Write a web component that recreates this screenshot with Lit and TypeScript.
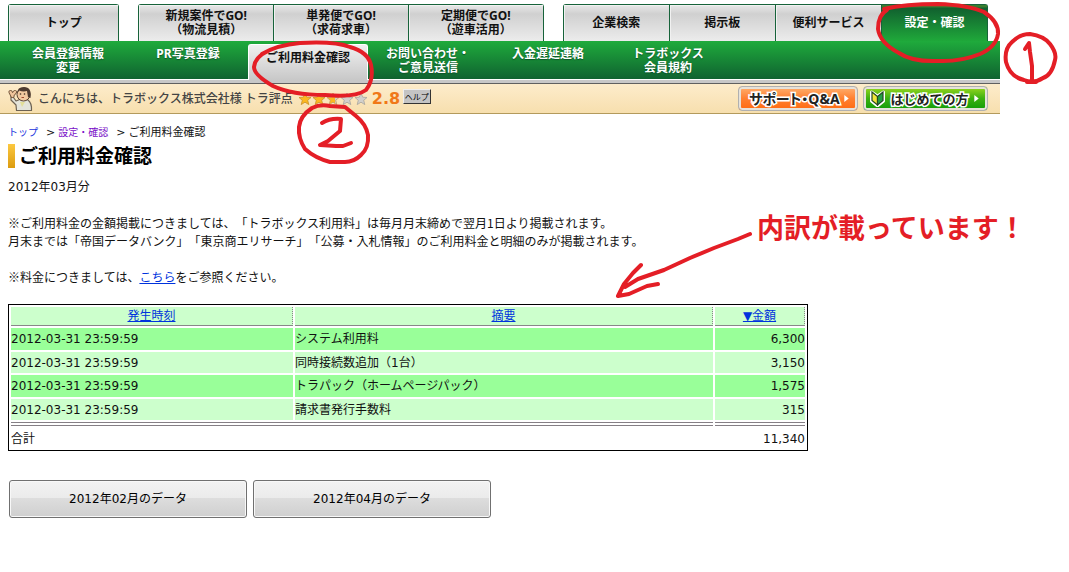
import { LitElement, html, css, svg } from "lit";
import { customElement } from "lit/decorators.js";

interface Tab {
  lines: string[];
  active?: boolean;
}

interface Charge {
  time: string;
  item: string;
  amount: string;
}

const TAB_GROUPS: { name: string; tabs: Tab[] }[] = [
  { name: "home", tabs: [{ lines: ["トップ"] }] },
  {
    name: "deals",
    tabs: [
      { lines: ["新規案件でGO!", "（物流見積）"] },
      { lines: ["単発便でGO!", "（求荷求車）"] },
      { lines: ["定期便でGO!", "（遊車活用）"] },
    ],
  },
  {
    name: "tools",
    tabs: [
      { lines: ["企業検索"] },
      { lines: ["掲示板"] },
      { lines: ["便利サービス"] },
      { lines: ["設定・確認"], active: true },
    ],
  },
];

const SUB_ITEMS: Tab[] = [
  { lines: ["会員登録情報", "変更"] },
  { lines: ["PR写真登録"] },
  { lines: ["ご利用料金確認"], active: true },
  { lines: ["お問い合わせ・", "ご意見送信"] },
  { lines: ["入金遅延連絡"] },
  { lines: ["トラボックス", "会員規約"] },
];

const CHARGES: Charge[] = [
  { time: "2012-03-31 23:59:59", item: "システム利用料", amount: "6,300" },
  { time: "2012-03-31 23:59:59", item: "同時接続数追加（1台）", amount: "3,150" },
  { time: "2012-03-31 23:59:59", item: "トラパック（ホームページパック）", amount: "1,575" },
  { time: "2012-03-31 23:59:59", item: "請求書発行手数料", amount: "315" },
];

const stack = (lines: string[]) => lines.map((l) => html`<span class="line">${l}</span>`);

@customElement("site-header")
class SiteHeader extends LitElement {
  static styles = css`
    :host {
      display: block;
      max-width: 1000px;
      font-weight: bold;
      font-size: 12px;
      line-height: 14px;
      font-family: "Noto Sans", "Noto Sans CJK JP", sans-serif;
    }
    a {
      color: inherit;
      text-decoration: none;
    }
    .line {
      display: block;
      white-space: nowrap;
    }
    .tabs {
      display: flex;
      gap: 19px;
      padding: 4px 12px 0 8px;
    }
    .group {
      display: flex;
      border: 1px solid #17633a;
      border-bottom: 0;
      border-radius: 3px 3px 0 0;
      box-sizing: border-box;
      min-width: 0;
    }
    .home { flex: 110 1 0; }
    .deals { flex: 406 1 0; }
    .tools { flex: 426 1 0; }
    .tab {
      flex: 1 1 0;
      min-width: 0;
      height: 36px;
      display: flex;
      flex-direction: column;
      align-items: center;
      justify-content: center;
      color: #111;
      background: linear-gradient(#e8e8e8 0, #d0d0d0 25%, #ececec 100%);
      box-shadow: inset 1px 1px 0 #f1f1f1;
    }
    .tab + .tab {
      border-left: 1px solid #17633a;
    }
    .tab.active {
      color: #fff;
      background: linear-gradient(#3a7d2f 0, #3a7d2f 2px, #11602f 3px, #1fa83a 100%);
      box-shadow: none;
    }
    .sub {
      display: flex;
      padding-left: 8px;
      height: 38px;
      color: #fff;
      background: linear-gradient(#1fab3c, #0f6230);
      border-bottom: 1px solid #fff;
    }
    .sub-item {
      flex: 0 1 120px;
      min-width: 0;
      padding-top: 6px;
      text-align: center;
      text-shadow: 0 1px 1px #0c5428;
    }
    .sub-item.active {
      margin: 3px 0 -1px;
      color: #111;
      text-shadow: none;
      background: linear-gradient(#f0f0f0, #c8c8c8);
      border: 1px solid #fff;
      border-bottom: 0;
      border-radius: 3px 3px 0 0;
      box-sizing: border-box;
    }
    .strip {
      height: 3px;
      background: #c8c8c8;
      border-bottom: 1px solid #606060;
    }
  `;

  render() {
    return html`
      <nav class="tabs">
        ${TAB_GROUPS.map(
          (g) => html`<div class="group ${g.name}">
            ${g.tabs.map((t) => html`<a href="#" class="tab ${t.active ? "active" : ""}">${stack(t.lines)}</a>`)}
          </div>`
        )}
      </nav>
      <nav class="sub">
        ${SUB_ITEMS.map((t) => html`<a href="#" class="sub-item ${t.active ? "active" : ""}">${stack(t.lines)}</a>`)}
      </nav>
      <div class="strip"></div>
    `;
  }
}

@customElement("greeting-bar")
class GreetingBar extends LitElement {
  static styles = css`
    :host {
      display: block;
      max-width: 1000px;
      font-family: "Noto Sans", "Noto Sans CJK JP", sans-serif;
      font-size: 12px;
    }
    .bar {
      display: flex;
      align-items: center;
      height: 29px;
      padding: 0 12px 0 8px;
      border-bottom: 1px solid #b39a5c;
      background: linear-gradient(#fdeccb, #f7dfae);
      white-space: nowrap;
    }
    .hello {
      margin-left: 4px;
      color: #444;
      font-weight: 500;
    }
    .stars {
      margin-left: 5px;
    }
    .score {
      margin-left: 4px;
      width: 31px;
      font: bold 16px "DejaVu Sans", sans-serif;
      color: #f07818;
    }
    .help {
      align-self: flex-start;
      margin-top: 5px;
      width: 28px;
      height: 15px;
      padding: 0;
      border: 1px solid;
      border-color: #eee #333 #333 #eee;
      background: #c4c4c4;
      color: #000;
      font: 8px/12px "Noto Sans CJK JP", sans-serif;
    }
    .links {
      display: flex;
      gap: 5px;
      margin-left: auto;
    }
    .pill {
      display: flex;
      align-items: center;
      justify-content: space-between;
      box-sizing: border-box;
      height: 25px;
      padding: 0 8px 0 6px;
      border: 1px solid #b0b0b0;
      border-radius: 4px;
      text-decoration: none;
      color: #222;
      font-weight: bold;
      font-size: 13px;
      line-height: 18px;
    }
    .support {
      width: 120px;
      padding-left: 10px;
      background: linear-gradient(#ffb070, #ff8030 50%, #ff6a10);
      box-shadow: inset 0 0 0 2px #e6e2da;
    }
    .beginner {
      width: 125px;
      background: linear-gradient(#9ad820, #3cb010 50%, #109c08);
      box-shadow: inset 0 0 0 2px #e6e2da;
    }
    .label {
      -webkit-text-stroke: 3px #fff;
      paint-order: stroke fill;
    }
    .support .label {
      font-size: 14px;
      font-feature-settings: "palt";
    }
  `;

  private star(i: number, fill: string, edge: string) {
    return svg`<path transform="translate(${i * 14} 0)" fill=${fill} stroke=${edge} stroke-width="0.8"
      d="M7 1 L8.7 5.2 L13 5.5 L9.7 8.3 L10.8 12.6 L7 10.2 L3.2 12.6 L4.3 8.3 L1 5.5 L5.3 5.2 Z" />`;
  }

  render() {
    return html`
      <div class="bar">
        <svg width="26" height="26" viewBox="0 0 26 26" aria-hidden="true">
          <path d="M3 8 L8 15 L13 13 L20 14 Q24 17 23.5 24.5 L8.5 24.5 L8 19 L3 14 Z" fill="#e4e4da" stroke="#6d6253" stroke-width="1.2" stroke-linejoin="round" />
          <path d="M4.5 10 L2.5 6 M4.5 9 L7 6" fill="none" stroke="#70533a" stroke-width="4" stroke-linecap="round" />
          <path d="M4.5 10 L2.5 6 M4.5 9 L7 6" fill="none" stroke="#f0c59c" stroke-width="2.4" stroke-linecap="round" />
          <ellipse cx="15.5" cy="8.5" rx="6.5" ry="6.5" fill="#f2c9a0" stroke="#5b4433" />
          <path d="M9.5 7 Q9 1 16 1 Q24 1 22.5 12 L20 11 L19 5 Q15 6 11 4.5 Z" fill="#4e3b30" />
          <circle cx="12.5" cy="8" r="0.8" fill="#3a2a20" />
          <circle cx="16.5" cy="8" r="0.8" fill="#3a2a20" />
          <path d="M13.5 11.5 H16" fill="none" stroke="#a04a30" />
          <path d="M12 16 L14 21 L17 16 Z" fill="#e3df9a" />
        </svg>
        <span class="hello">こんにちは、トラボックス株式会社様 トラ評点</span>
        <svg class="stars" width="70" height="14" viewBox="0 0 70 14" role="img" aria-label="2.8">
          <defs>
            <linearGradient id="part">
              <stop offset="0.7" stop-color="#fcb820" />
              <stop offset="0.7" stop-color="#cfcfcf" />
            </linearGradient>
          </defs>
          ${this.star(0, "#fcb820", "#c8922c")}${this.star(1, "#fcb820", "#c8922c")}
          ${this.star(2, "url(#part)", "#c0a060")}${this.star(3, "#d2d0cc", "#a8a49c")}
          ${this.star(4, "#d2d0cc", "#a8a49c")}
        </svg>
        <span class="score">2.8</span>
        <button class="help" type="button">ヘルプ</button>
        <div class="links">
          <a href="#" class="pill support">
            <span class="label">サポート・Q&amp;A</span>
            <svg width="5" height="7" viewBox="0 0 5 8" aria-hidden="true"><path d="M0 0 L5 4 L0 8 Z" fill="#fff" /></svg>
          </a>
          <a href="#" class="pill beginner">
            <svg width="15" height="17" viewBox="0 0 15 17" aria-hidden="true">
              <path d="M1.5 2 L7.5 6 L13.5 2 V11 L7.5 16 L1.5 11 Z" fill="#fff" stroke="#fff" stroke-width="3" stroke-linejoin="round" />
              <path d="M2 2 L7.5 6.5 V15 L2 10.5 Z" fill="#f2e63a" stroke="#234a20" stroke-width="1.2" />
              <path d="M13 2 L7.5 6.5 V15 L13 10.5 Z" fill="#23a043" stroke="#234a20" stroke-width="1.2" />
            </svg>
            <span class="label">はじめての方</span>
            <svg width="5" height="7" viewBox="0 0 5 8" aria-hidden="true"><path d="M0 0 L5 4 L0 8 Z" fill="#fff" /></svg>
          </a>
        </div>
      </div>
    `;
  }
}

@customElement("charge-table")
class ChargeTable extends LitElement {
  static styles = css`
    :host {
      display: block;
      max-width: 800px;
    }
    .charges {
      width: 100%;
      table-layout: fixed;
      border: 1px solid #000;
      border-collapse: separate;
      border-spacing: 2px;
      line-height: 18px;
    }
    .col-time { width: 282px; }
    .col-amount { width: 90px; }
    th, td {
      padding: 0;
      text-align: left;
      font-weight: normal;
    }
    th {
      height: 18px;
      text-align: center;
      background: #ccffcc;
      border-right: 1px dotted #888;
      border-bottom: 1px solid #888;
    }
    th a { color: #0033dd; }
    .row td { height: 22px; background: #99ff99; }
    .row.alt td { height: 21px; background: #ccffcc; }
    .row .amount, .total .amount { text-align: right; }
    .total td {
      height: 19px;
      padding-top: 3px;
      border-top: 4px double #857f85;
    }
  `;

  render() {
    return html`
      <table class="charges">
        <colgroup>
          <col class="col-time" />
          <col />
          <col class="col-amount" />
        </colgroup>
        <thead>
          <tr>
            <th scope="col"><a href="#">発生時刻</a></th>
            <th scope="col"><a href="#">摘要</a></th>
            <th scope="col"><a href="#">▼金額</a></th>
          </tr>
        </thead>
        <tbody>
          ${CHARGES.map(
            (c, i) => html`<tr class="row ${i % 2 ? "alt" : ""}">
              <td>${c.time}</td>
              <td>${c.item}</td>
              <td class="amount">${c.amount}</td>
            </tr>`
          )}
        </tbody>
        <tfoot>
          <tr class="total">
            <td colspan="2">合計</td>
            <td class="amount">11,340</td>
          </tr>
        </tfoot>
      </table>
    `;
  }
}

@customElement("app-root")
class AppRoot extends LitElement {
  static styles = css`
    :host {
      display: block;
      position: relative;
      overflow: hidden;
      background: #fff;
      color: #111;
      font-family: "DejaVu Sans", "Noto Sans CJK JP", sans-serif;
      font-size: 12px;
      line-height: 18px;
      text-spacing-trim: space-all;
    }
    .content {
      padding: 10px 8px 54px;
    }
    .crumbs {
      display: flex;
      gap: 3px;
      font-size: 11px;
    }
    .crumbs a {
      margin-right: 5px;
      font-size: 10px;
      text-decoration: none;
    }
    .crumbs .first { color: #2233dd; }
    .crumbs .visited { color: #7a10c8; }
    .title {
      display: flex;
      align-items: center;
      gap: 4px;
      margin: 2px 0 10px;
      font-size: 19px;
      line-height: 24px;
      color: #000;
    }
    .title::before {
      content: "";
      width: 7px;
      height: 24px;
      background: linear-gradient(#fcc840, #dc9c10);
    }
    p { margin: 0 0 18px; }
    p a { color: #0033dd; }
    .info { font-family: "Noto Sans CJK JP", sans-serif; }
    .months {
      display: flex;
      flex-wrap: wrap;
      gap: 6px;
      padding: 29px 1px 0;
    }
    .month {
      width: 238px;
      height: 38px;
      border: 1px solid #707070;
      border-radius: 3px;
      box-shadow: inset 0 0 0 1px #f8f8f8;
      background: linear-gradient(#f2f2f2, #ebebeb 47%, #dddddd 48%, #cfcfcf);
      color: #000;
      font: inherit;
    }
    .ink {
      position: absolute;
      left: 0;
      top: 0;
      pointer-events: none;
    }
    .note {
      position: absolute;
      left: 757px;
      top: 211px;
      font-size: 27px;
      line-height: 36px;
      font-weight: bold;
      white-space: nowrap;
      color: #e41e26;
    }
  `;

  render() {
    return html`
      <site-header></site-header>
      <greeting-bar></greeting-bar>
      <main class="content">
        <nav class="crumbs">
          <a href="#" class="first">トップ</a><span>&gt;</span>
          <a href="#" class="visited">設定・確認</a><span>&gt;</span>
          <span>ご利用料金確認</span>
        </nav>
        <h1 class="title">ご利用料金確認</h1>
        <p>2012年03月分</p>
        <p class="info">
          ※ご利用料金の金額掲載につきましては、「トラボックス利用料」は毎月月末締めで翌月1日より掲載されます。<br />
          月末までは「帝国データバンク」「東京商エリサーチ」「公募・入札情報」のご利用料金と明細のみが掲載されます。
        </p>
        <p class="info">※料金につきましては、<a href="#">こちら</a>をご参照ください。</p>
        <charge-table></charge-table>
        <div class="months">
          <button type="button" class="month">2012年02月のデータ</button>
          <button type="button" class="month">2012年04月のデータ</button>
        </div>
      </main>
      <svg class="ink" width="1069" height="320" viewBox="0 0 1069 320" fill="none" stroke="#e41e26" stroke-width="4"
        stroke-linejoin="round" stroke-linecap="round" aria-hidden="true">
        <path d="M884 9 Q905 4 938 4 Q968 5 984 12 Q999 22 998 34 Q996 47 980 54 Q960 62 938 61 Q912 62 899 53 Q880 43 878 29 Q878 15 887 10" />
        <path d="M1030 34 Q1044 36 1050 44 Q1057 53 1055 60 Q1052 75 1043 78 Q1034 84 1024 80 Q1010 77 1006 62 Q1004 49 1012 42 Q1020 34 1030 34 Z" />
        <path d="M1025 49 L1029 43 L1030 52 L1032 66 L1032 80 M1027 82 L1036 82" />
        <path d="M262 54 Q277 45 300 43 Q335 41 350 47 Q368 52 371 65 Q374 80 366 90 Q355 98 325 95 Q292 95 273 86 Q254 75 254 67 Q255 57 268 51" />
        <path d="M312 108 Q320 104 330 106 L345 107 L356 116 Q366 124 368 135 Q369 148 361 155 Q354 162 345 162 L330 162 Q315 158 305 149 Q298 138 299 127 Q300 116 312 108 Z" />
        <path d="M322 123 Q330 118 341 119 L340 131 L328 141 L320 145 L336 146 L343 146 L351 143" />
        <path d="M750 234 L738 239 L714 248 L690 258 L664 270 L638 279 L625 287 M641 265 L633 273 L624 284 L618 296 L629 294 L647 286 L658 284" />
      </svg>
      <div class="note">内訳が載っています！</div>
    `;
  }
}
